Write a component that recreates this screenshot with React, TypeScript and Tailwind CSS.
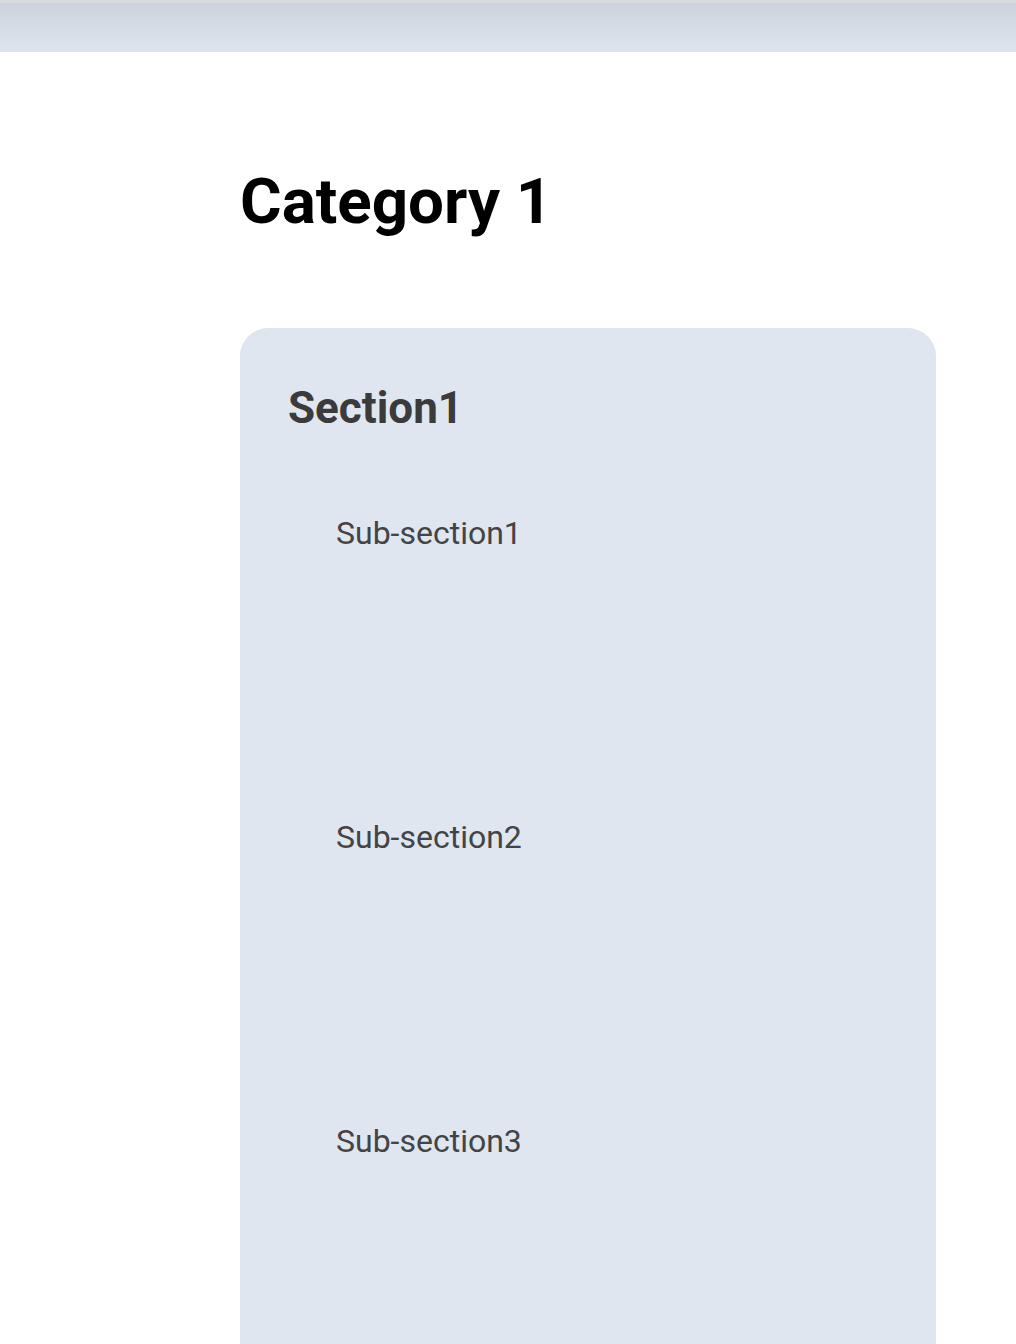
import React from "react";

export default function App() {
  const subs = ["Sub-section1", "Sub-section2", "Sub-section3"];
  return (
    <div className="w-[1016px] h-[1344px] overflow-hidden bg-white" style={{ fontFamily: "Roboto, sans-serif" }}>
      <div className="h-[52px] border-t-[3px] border-[#d9dadc] bg-gradient-to-b from-[#ccd3dc] to-[#dfe5ee]" />
      <div className="pl-[240px] pr-[80px]">
        <h1 className="mt-[112px] text-[63.7px] leading-[76px] font-bold text-black">Category 1</h1>
        <div className="mt-[88px] rounded-t-[28px] bg-[#dfe6ef] pl-[48px] pt-[52px] h-[1100px]">
          <h2 className="text-[44px] leading-[56px] font-bold text-[#3b3b3b]">Section1</h2>
          <div className="mt-[76px] pl-[48px] flex flex-col gap-[262px]">
            {subs.map((s) => (
              <div key={s} className="text-[32px] leading-[42px] text-[#444446]">{s}</div>
            ))}
          </div>
        </div>
      </div>
    </div>
  );
}
